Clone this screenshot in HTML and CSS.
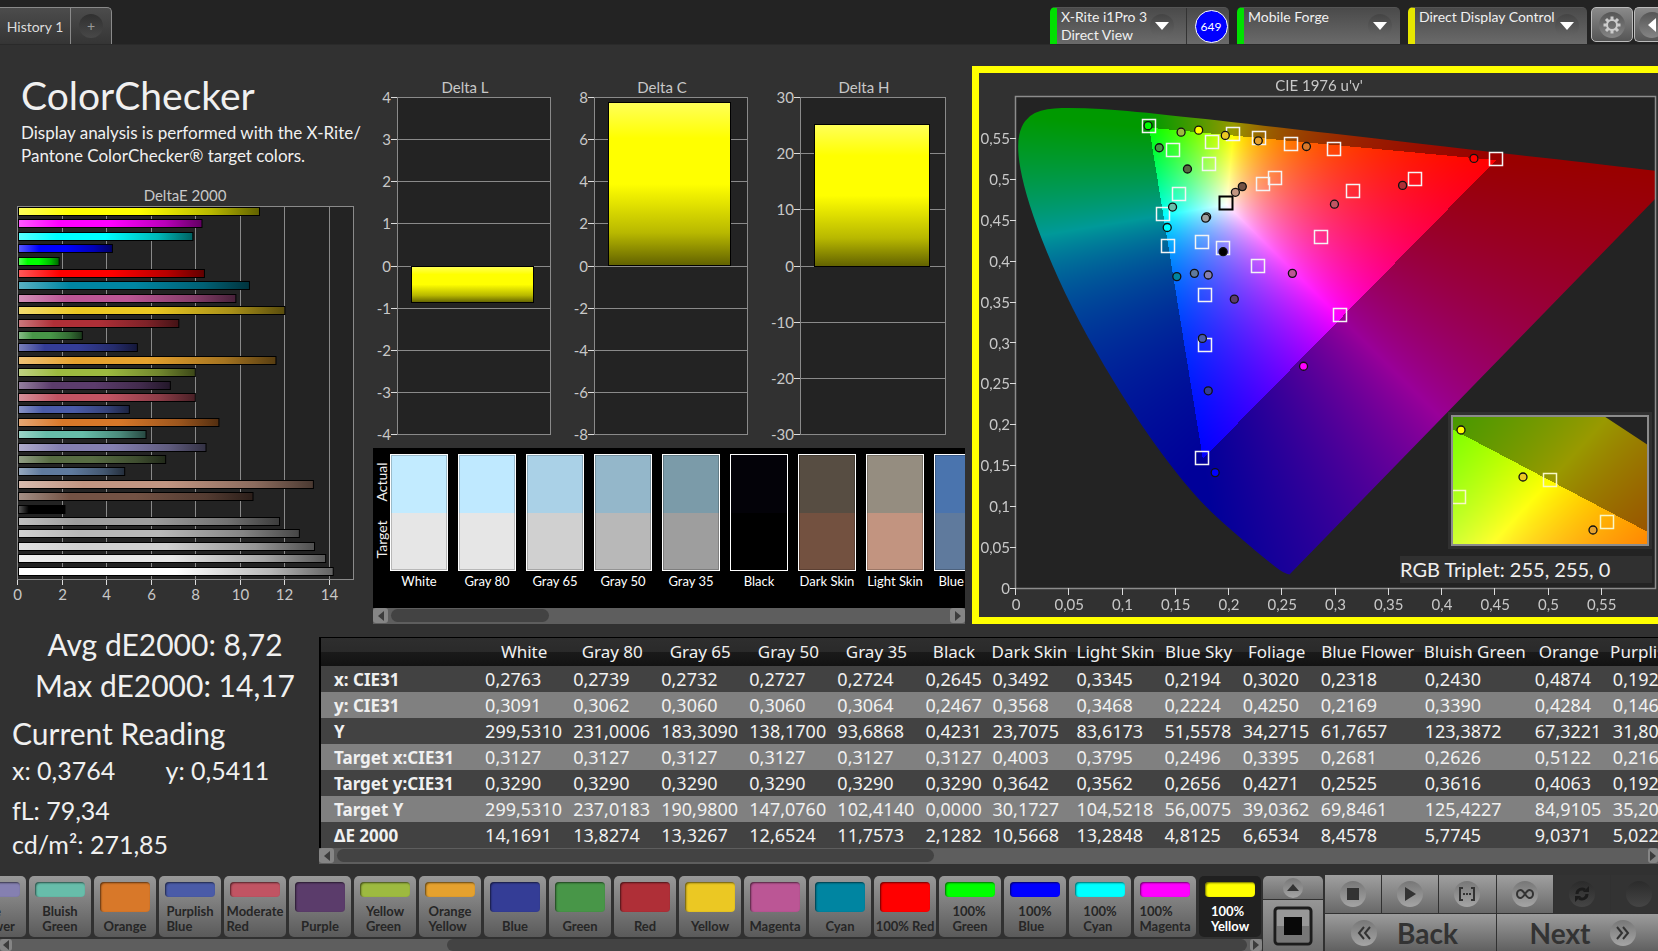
FILE: index.html
```html
<!DOCTYPE html>
<html lang="en">
<head>
<meta charset="utf-8">
<title>ColorChecker</title>
<link rel="stylesheet" href="styles.css">
</head>
<body>
<header class="topbar">
  <nav class="tabs">
    <button class="tab" type="button">History 1</button>
    <button class="tab tab-add" type="button" aria-label="Add history"><span class="add-dot">+</span></button>
  </nav>
  <div class="devices">
    <div class="device device-meter">
      <div class="device-main">
        <select class="device-select" aria-label="Meter"><option>X-Rite i1Pro 3</option></select>
        <span class="device-mode">Direct View</span>
        <span class="drop"><svg width="14" height="8"><path d="M0 0h14l-7 8z" fill="#fff"/></svg></span>
      </div>
      <div class="badge-cell"><span class="badge">649</span></div>
    </div>
    <div class="device device-source">
      <div class="device-main">
        <select class="device-select" aria-label="Source"><option>Mobile Forge</option></select>
        <span class="drop"><svg width="14" height="8"><path d="M0 0h14l-7 8z" fill="#fff"/></svg></span>
      </div>
    </div>
    <div class="device device-display">
      <div class="device-main">
        <select class="device-select" aria-label="Display"><option>Direct Display Control</option></select>
        <span class="drop"><svg width="14" height="8"><path d="M0 0h14l-7 8z" fill="#fff"/></svg></span>
      </div>
    </div>
    <button class="square-btn" type="button" aria-label="Settings"><span class="round"><svg width="20" height="20" viewBox="-10 -10 20 20"><g fill="#ccc"><path d="M-1.500 -8.500h3v4h-3z"/><path d="M-1.500 -8.500h3v4h-3z" transform="rotate(45)"/><path d="M-1.500 -8.500h3v4h-3z" transform="rotate(90)"/><path d="M-1.500 -8.500h3v4h-3z" transform="rotate(135)"/><path d="M-1.500 -8.500h3v4h-3z" transform="rotate(180)"/><path d="M-1.500 -8.500h3v4h-3z" transform="rotate(225)"/><path d="M-1.500 -8.500h3v4h-3z" transform="rotate(270)"/><path d="M-1.500 -8.500h3v4h-3z" transform="rotate(315)"/></g><circle r="5" fill="none" stroke="#ccc" stroke-width="2"/></svg></span></button>
    <button class="square-btn square-cut" type="button" aria-label="Collapse"><span class="round"><svg width="8" height="14"><path d="M8 0v14L0 7z" fill="#fff"/></svg></span></button>
  </div>
</header>

<main class="main">
  <section class="upper">
    <div class="summary">
      <h1 class="title">ColorChecker</h1>
      <p class="intro">Display analysis is performed with the X-Rite/<br>Pantone ColorChecker® target colors.</p>
      <svg class="chart" id="deltae" role="img" aria-label="DeltaE 2000"></svg>
    </div>
    <div class="middle">
      <div class="deltas">
        <svg class="chart" id="delta-l" role="img" aria-label="Delta L"></svg>
        <svg class="chart" id="delta-c" role="img" aria-label="Delta C"></svg>
        <svg class="chart" id="delta-h" role="img" aria-label="Delta H"></svg>
      </div>
      <div class="compare">
        <div class="compare-view">
          <div class="compare-side"><span>Actual</span><span>Target</span></div>
          <div class="compare-list" id="compare"></div>
        </div>
        <div class="scroll">
          <button class="scroll-btn" type="button" aria-label="Scroll left"><svg width="6" height="10"><path d="M6 0v10L0 5z"/></svg></button>
          <div class="track"><div class="thumb thumb-compare"></div></div>
          <button class="scroll-btn" type="button" aria-label="Scroll right"><svg width="6" height="10"><path d="M0 0v10l6-5z"/></svg></button>
        </div>
      </div>
    </div>
    <div class="cie">
      <canvas class="cie-fill" id="cie-fill"></canvas>
      <svg class="cie-axes" id="cie" role="img" aria-label="CIE 1976 u'v'"></svg>
      <div class="inset"><canvas class="inset-fill" id="inset-fill"></canvas><svg class="inset-marks" id="inset"></svg></div>
      <p class="triplet">RGB Triplet: 255, 255, 0</p>
    </div>
  </section>

  <section class="lower">
    <div class="reading">
      <p class="stat">Avg dE2000: 8,72</p>
      <p class="stat">Max dE2000: 14,17</p>
      <h2 class="reading-title">Current Reading</h2>
      <p class="pair"><span>x: 0,3764</span><span>y: 0,5411</span></p>
      <p class="line line-fl">fL: 79,34</p>
      <p class="line">cd/m²: 271,85</p>
    </div>
    <div class="data">
      <div class="data-view">
        <table class="grid">
          <colgroup><col class="c-name"><col class="c-88"><col class="c-88"><col class="c-88"><col class="c-88"><col class="c-88"><col class="c-67"><col class="c-84"><col class="c-88"><col class="c-78"><col class="c-78"><col class="c-104"><col class="c-110"><col class="c-78"><col class="c-110"></colgroup>
          <thead><tr><th></th><th scope="col">White</th><th scope="col">Gray 80</th><th scope="col">Gray 65</th><th scope="col">Gray 50</th><th scope="col">Gray 35</th><th scope="col">Black</th><th scope="col">Dark Skin</th><th scope="col">Light Skin</th><th scope="col">Blue Sky</th><th scope="col">Foliage</th><th scope="col">Blue Flower</th><th scope="col">Bluish Green</th><th scope="col">Orange</th><th scope="col">Purplish Blue</th></tr></thead>
          <tbody>
            <tr><th scope="row">x: CIE31</th><td>0,2763</td><td>0,2739</td><td>0,2732</td><td>0,2727</td><td>0,2724</td><td>0,2645</td><td>0,3492</td><td>0,3345</td><td>0,2194</td><td>0,3020</td><td>0,2318</td><td>0,2430</td><td>0,4874</td><td>0,192</td></tr>
            <tr><th scope="row">y: CIE31</th><td>0,3091</td><td>0,3062</td><td>0,3060</td><td>0,3060</td><td>0,3064</td><td>0,2467</td><td>0,3568</td><td>0,3468</td><td>0,2224</td><td>0,4250</td><td>0,2169</td><td>0,3390</td><td>0,4284</td><td>0,146</td></tr>
            <tr><th scope="row">Y</th><td>299,5310</td><td>231,0006</td><td>183,3090</td><td>138,1700</td><td>93,6868</td><td>0,4231</td><td>23,7075</td><td>83,6173</td><td>51,5578</td><td>34,2715</td><td>61,7657</td><td>123,3872</td><td>67,3221</td><td>31,80</td></tr>
            <tr><th scope="row">Target x:CIE31</th><td>0,3127</td><td>0,3127</td><td>0,3127</td><td>0,3127</td><td>0,3127</td><td>0,3127</td><td>0,4003</td><td>0,3795</td><td>0,2496</td><td>0,3395</td><td>0,2681</td><td>0,2626</td><td>0,5122</td><td>0,216</td></tr>
            <tr><th scope="row">Target y:CIE31</th><td>0,3290</td><td>0,3290</td><td>0,3290</td><td>0,3290</td><td>0,3290</td><td>0,3290</td><td>0,3642</td><td>0,3562</td><td>0,2656</td><td>0,4271</td><td>0,2525</td><td>0,3616</td><td>0,4063</td><td>0,192</td></tr>
            <tr><th scope="row">Target Y</th><td>299,5310</td><td>237,0183</td><td>190,9800</td><td>147,0760</td><td>102,4140</td><td>0,0000</td><td>30,1727</td><td>104,5218</td><td>56,0075</td><td>39,0362</td><td>69,8461</td><td>125,4227</td><td>84,9105</td><td>35,20</td></tr>
            <tr><th scope="row">ΔE 2000</th><td>14,1691</td><td>13,8274</td><td>13,3267</td><td>12,6524</td><td>11,7573</td><td>2,1282</td><td>10,5668</td><td>13,2848</td><td>4,8125</td><td>6,6534</td><td>8,4578</td><td>5,7745</td><td>9,0371</td><td>5,022</td></tr>
          </tbody>
        </table>
      </div>
      <div class="scroll">
        <button class="scroll-btn" type="button" aria-label="Scroll left"><svg width="6" height="10"><path d="M6 0v10L0 5z"/></svg></button>
        <div class="track"><div class="thumb thumb-data"></div></div>
        <button class="scroll-btn scroll-cut" type="button" aria-label="Scroll right"><svg width="6" height="10"><path d="M0 0v10l6-5z"/></svg></button>
      </div>
    </div>
  </section>
</main>

<footer class="bottom">
  <div class="strip">
    <div class="patches" id="patches"></div>
    <div class="scroll scroll-strip">
      <button class="scroll-btn" type="button" aria-label="Scroll left"><svg width="6" height="10"><path d="M6 0v10L0 5z"/></svg></button>
      <div class="track"><div class="thumb thumb-strip"></div></div>
      <button class="scroll-btn" type="button" aria-label="Scroll right"><svg width="6" height="10"><path d="M0 0v10l6-5z"/></svg></button>
    </div>
  </div>
  <div class="view">
    <button class="view-up" type="button" aria-label="Expand"><span class="knob knob-up"><svg width="12" height="7"><path d="M0 7h12L6 0z"/></svg></span></button>
    <button class="view-window" type="button" aria-label="Pattern window"><svg width="40" height="40"><rect x="2" y="2" width="36" height="36" rx="3" fill="#989898" stroke="#1c1c1c" stroke-width="3"/><path d="M4 20h32v16H4z" fill="#777"/><rect x="11" y="11" width="18" height="18" fill="#080808"/></svg></button>
  </div>
  <div class="control">
    <div class="transport">
      <button class="key" type="button" aria-label="Stop"><span class="knob"><svg width="12" height="12"><path d="M0 0h12v12H0z"/></svg></span></button>
      <button class="key" type="button" aria-label="Play"><span class="knob"><svg width="12" height="14"><path d="M1 0v14l11-7z"/></svg></span></button>
      <button class="key" type="button" aria-label="Read range"><span class="knob"><svg width="18" height="14" viewBox="0 0 18 14"><path d="M5 1H2v12h3M13 1h3v12h-3" fill="none" stroke="#333" stroke-width="2"/><path d="M5 6h2v2H5zM8 6h2v2H8zM11 6h2v2h-2z"/></svg></span></button>
      <button class="key" type="button" aria-label="Continuous"><span class="knob"><svg width="18" height="10" viewBox="0 0 18 10"><path d="M9 5C7 2 6 1 4.500 1a3.500 4 0 0 0 0 8C6 9 7 8 9 5s3-4 4.500-4a3.500 4 0 0 1 0 8C12 9 11 8 9 5z" fill="none" stroke="#333" stroke-width="2"/></svg></span></button>
      <button class="key key-off" type="button" aria-label="Repeat" disabled><span class="knob"><svg width="16" height="16" viewBox="0 0 16 16"><path d="M3 8a5 5 0 0 1 8-4M13 8a5 5 0 0 1-8 4" fill="none" stroke="#1c1c1c" stroke-width="3"/><path d="M9 6h6V0zM7 10H1v6z" fill="#1c1c1c"/></svg></span></button>
      <button class="key key-off" type="button" aria-label="Record" disabled><span class="knob"></span></button>
    </div>
    <div class="steps">
      <button class="step" type="button"><span class="knob"><svg width="14" height="14" viewBox="0 0 14 14"><path d="M7 1L2 7l5 6M13 1L8 7l5 6" fill="none" stroke="#333" stroke-width="2"/></svg></span>Back</button>
      <button class="step step-next" type="button">Next<span class="knob"><svg width="14" height="14" viewBox="0 0 14 14"><path d="M1 1l5 6-5 6M7 1l5 6-5 6" fill="none" stroke="#333" stroke-width="2"/></svg></span></button>
    </div>
  </div>
</footer>
<script src="app.js"></script>
</body>
</html>
```

FILE: styles.css
```css
* { box-sizing: border-box; }
body {
  margin: 0;
  min-height: 100vh;
  display: flex;
  flex-direction: column;
  overflow: hidden;
  background: #313131;
  color: #f0f0f0;
  font-family: Lato, "Open Sans", sans-serif;
}
button, select { font-family: inherit; margin: 0; padding: 0; border: 0; }
h1, h2, p { margin: 0; font-weight: 400; }

/* top bar */
.topbar {
  display: flex;
  justify-content: space-between;
  height: 45px;
  padding-top: 7px;
  background: #232323;
  border-bottom: 1px solid #2a2a2a;
  flex: none;
}
.tabs { display: flex; }
.tab {
  width: 71px;
  border-top: 1px solid #8a8a8a;
  border-right: 1px solid #8a8a8a;
  background: linear-gradient(#4c4c4c, #353535);
  color: #dcdcdc;
  font-size: 14px;
}
.tab-add { width: 41px; border-top-right-radius: 5px; display: grid; place-items: center; }
.add-dot {
  width: 24px; height: 24px; border-radius: 50%;
  background: linear-gradient(#303030, #484848);
  color: #999; font-size: 14px; line-height: 24px;
}
.devices { display: flex; }
.device {
  display: flex;
  margin-right: 8px;
  border-left: 7px solid #0c0;
  border-radius: 5px 5px 0 0;
  background: linear-gradient(#4a4a4a, #6a6a6a);
  border-top: 1px solid #555;
}
.device-meter, .device-source { border-left-color: #00e000; }
.device-meter { width: 179px; }
.device-source { width: 163px; }
.device-display { width: 179px; border-left-color: #e6e600; margin-right: 4px; }
.device-main {
  flex: 1;
  display: grid;
  grid-template-columns: 1fr 24px;
  grid-template-rows: 17px 19px;
  padding-right: 12px;
  padding-left: 4px;
}
.device-source .device-main { padding-right: 8px; }
.device-select {
  appearance: none;
  background: none;
  color: #f0f0f0;
  font-size: 14px;
  line-height: 17px;
  grid-column: 1;
  grid-row: 1;
  overflow: visible;
}
.device-mode { grid-column: 1; grid-row: 2; font-size: 14px; line-height: 19px; }
.drop {
  grid-column: 2; grid-row: 1 / 3; align-self: center;
  width: 24px; height: 24px; border-radius: 50%;
  display: grid; place-items: center;
  background: linear-gradient(#444, #666);
}
.badge-cell { width: 43px; border-left: 1px solid #333; padding-left: 6px; display: grid; place-items: center; }
.badge {
  width: 33px; height: 33px; border-radius: 50%;
  background: #00f; border: 1px solid #fff;
  font-size: 12px; line-height: 31px; text-align: center; color: #fff;
}
.square-btn {
  width: 42px; height: 35px; margin-right: 1px;
  border: 1px solid #bbb; border-radius: 5px;
  background: linear-gradient(#8a8a8a, #555);
  display: grid; place-items: center;
}
.square-cut { width: 24px; margin-right: 0; border-right: 0; border-radius: 5px 0 0 5px; justify-content: start; padding-left: 4px; overflow: hidden; }
.round {
  width: 26px; height: 26px; border-radius: 50%;
  display: grid; place-items: center;
  background: linear-gradient(#555, #858585);
}

/* main areas */
.main { flex: 1; display: flex; flex-direction: column; }
.upper { flex: 1; display: flex; min-height: 579px; }
.summary { width: 373px; display: flex; flex-direction: column; flex: none; }
.title { padding: 26px 0 0 21px; font-size: 39px; line-height: 48px; }
.intro { padding: 2px 0 0 21px; font-size: 17px; line-height: 23px; white-space: nowrap; }
.chart { display: block; flex: 1; width: 100%; min-height: 0; font-size: 15px; fill: #c8c8c8; }
.middle { width: 592px; flex: none; display: flex; flex-direction: column; }
.deltas { flex: 1; display: grid; grid-template-columns: 196px 198px 198px; min-height: 0; }
.deltas .chart { height: 100%; }

.compare { background: #000; }
.compare-view { display: flex; height: 160px; padding-top: 6px; overflow: hidden; }
.compare-side { width: 17px; flex: none; display: flex; flex-direction: column; height: 113px; }
.compare-side span {
  flex: 1; writing-mode: vertical-rl; transform: rotate(180deg);
  text-align: center; font-size: 14px; line-height: 17px;
}
.compare-list { display: flex; gap: 10px; }
.pair-card { width: 58px; flex: none; margin: 0; }
.pair-box { display: flex; flex-direction: column; height: 117px; border: 1px solid #fff; outline: 1px solid rgba(0,0,0,.2); outline-offset: -2px; }
.pair-box span { flex: 1; }
.pair-card figcaption { font-size: 13px; line-height: 20px; text-align: center; white-space: nowrap; color: #fff; }

.scroll { display: flex; height: 16px; background: #5e5e5e; }
.scroll-btn { width: 15px; height: 15px; border-radius: 3px; background: #858585; fill: #3c3c3c; display: grid; place-items: center; }
.scroll-cut { width: 10px; }
.track { flex: 1; padding: 1px 3px; }
.thumb { height: 13px; border-radius: 7px; background: #434343; }
.thumb-compare { width: 158px; }
.thumb-data { width: 597px; max-width: 50%; }
.thumb-strip { width: 800px; margin-left: auto; }

.cie {
  flex: 1; min-width: 0;
  position: relative;
  margin: 21px 0 0 7px;
  border: 7px solid #ff0;
  border-right: 0;
}
.cie-fill { position: absolute; }
.cie-axes { position: absolute; inset: 0; width: 100%; height: 100%; font-size: 15px; fill: #c8c8c8; }
.inset {
  position: absolute; right: 6px; bottom: 68px;
  width: 204px; height: 137px; padding: 3px;
  background: #303030;
}
.inset-fill, .inset-marks { position: absolute; left: 3px; top: 3px; width: 198px; height: 131px; }
.inset-marks { border: 2px solid #8c8c8c; }
.triplet {
  position: absolute; right: 6px; bottom: 34px;
  width: 252px; background: #303030;
  font-size: 20px; line-height: 27px;
}

/* readings and table */
.lower { display: flex; height: 250px; flex: none; }
.reading { width: 319px; flex: none; }
.stat { width: 330px; text-align: center; font-size: 30px; line-height: 41px; }
.reading-title { padding-left: 12px; font-size: 30px; line-height: 40px; margin-top: 7px; }
.pair { display: flex; padding-left: 12px; font-size: 25px; line-height: 34px; }
.pair span { width: 157px; }
.line { padding-left: 12px; font-size: 25px; line-height: 34px; }
.line-fl { margin-top: 6px; }
.data { flex: 1; min-width: 0; padding: 13px 0 0; }
.data-view { overflow: hidden; border-top: 1px solid #000; border-left: 2px solid #000; }
.grid { border-collapse: collapse; table-layout: fixed; width: 1397px; font-family: "Noto Sans", "Open Sans", sans-serif; }
.c-name { width: 159px; }
.c-67 { width: 67px; }
.c-78 { width: 78px; }
.c-84 { width: 84px; }
.c-88 { width: 88px; }
.c-104 { width: 104px; }
.c-110 { width: 110px; }
.grid th, .grid td { padding: 0 5px; white-space: nowrap; height: 26px; }
.grid thead tr { background: linear-gradient(#2e2e2e, #2a2a2a 50%, #1a1a1a 50%, #121212); }
.grid thead th { height: 28px; font-weight: 400; font-size: 17px; line-height: 28px; padding: 0; }
.grid tbody th { text-align: left; padding-left: 13px; font-size: 17px; line-height: 25px; }
.grid tbody td { font-size: 18px; line-height: 25px; }
.grid tbody tr { background: #424242; }
.grid tbody tr:nth-child(even) { background: #808080; }

/* bottom bar */
.bottom { display: flex; height: 77px; flex: none; background: #313131; }
.strip { flex: 1; min-width: 0; display: flex; flex-direction: column; justify-content: space-between; }
.patches { display: flex; justify-content: flex-end; gap: 3px; overflow: hidden; padding: 2px 1px 0 0; }
.patch {
  width: 62px; height: 61px; flex: none;
  display: flex; flex-direction: column; align-items: center; justify-content: space-between;
  padding-top: 6px; padding-bottom: 3px;
  border-radius: 5px;
  background: linear-gradient(#999, #5a5a5a);
  color: #262626; font-size: 13px; line-height: 15px; font-weight: 700; text-align: left;
}
.patch-on { background: #202020; color: #fff; }
.chip { width: 50px; height: 15px; border-radius: 4px; box-shadow: inset 1px 1px 2px rgba(0,0,0,.6); }
.chip-tall { height: 30px; }
.scroll-strip { height: 12px; }
.scroll-strip .scroll-btn { width: 12px; height: 12px; }
.scroll-strip .track { padding: 0 3px; }
.scroll-strip .thumb { height: 12px; }
.view { width: 60px; margin: 2px 2px 0 1px; display: flex; flex-direction: column; gap: 1px; }
.view-up, .view-window { display: grid; place-items: center; background: linear-gradient(#969696, #6e6e6e); }
.view-up { height: 23px; border-radius: 5px 5px 0 0; }
.view-window { flex: 1; }
.control { width: 333px; flex: none; display: flex; flex-direction: column; overflow: hidden; padding-top: 1px; }
.transport { display: flex; gap: 1px; height: 38px; width: 342px; }
.key { flex: 1; display: grid; place-items: center; background: linear-gradient(#a0a0a0, #686868); }
.key-off { background: #333; }
.knob {
  width: 26px; height: 26px; border-radius: 50%;
  display: grid; place-items: center; flex: none;
  background: linear-gradient(#777, #a5a5a5);
  fill: #333;
}
.knob-up { width: 20px; height: 20px; }
.key-off .knob { background: linear-gradient(#2b2b2b, #454545); }
.steps { display: grid; grid-template-columns: 1fr 1fr; gap: 1px; flex: 1; margin-top: 1px; width: 342px; }
.step {
  display: flex; align-items: center; gap: 20px; padding-left: 26px;
  background: linear-gradient(#9c9c9c, #606060);
  color: #333; font-size: 28px; line-height: 34px; font-weight: 700;
}
.step-next { padding-left: 33px; }
```

FILE: app.js
```js
const NS = 'http://www.w3.org/2000/svg';

function add(parent, tag, attrs, text) {
  const el = document.createElementNS(NS, tag);
  for (const k in attrs) el.setAttribute(k, attrs[k]);
  if (text !== undefined) el.textContent = text;
  parent.appendChild(el);
  return el;
}

function shade(hex, t) {
  const to = t > 0 ? 255 : 0, a = Math.abs(t);
  return 'rgb(' + [1, 3, 5].map(i => {
    const c = parseInt(hex.substr(i, 2), 16);
    return Math.round(c + (to - c) * a);
  }).join(',') + ')';
}

function gradient(svg, id, color, vertical) {
  const g = add(svg, 'linearGradient', vertical ? { id, x1: 0, y1: 0, x2: 0, y2: 1 } : { id });
  [[0, .35], [.22, 0], [.5, 0], [.8, -.28], [1, -.62]].forEach(([o, t]) =>
    add(g, 'stop', { offset: o, 'stop-color': shade(color, t) }));
}

/* DeltaE bars, top to bottom */
const bars = [
  [10.86, '#ffff00'], [8.28, '#ff00ff'], [7.87, '#00ffff'], [4.26, '#0000ff'], [1.87, '#00ff00'],
  [8.39, '#ff0000'], [10.41, '#0085a1'], [9.8, '#bb5695'], [12, '#ebc823'], [7.24, '#af2f37'],
  [2.91, '#489648'], [5.38, '#343d96'], [11.6, '#e5a12e'], [7.98, '#9dba40'], [6.86, '#5b3c6b'],
  [7.98, '#c15463'], [5.02, '#4a5ba8'], [9.04, '#d87829'], [5.77, '#67bdaa'], [8.46, '#8580b1'],
  [6.65, '#576c43'], [4.81, '#5f7a9d'], [13.28, '#c29682'], [10.57, '#735244'], [2.13, '#000000'],
  [11.76, '#9e9e9e'], [12.65, '#b8b8b8'], [13.33, '#d0d0d0'], [13.83, '#e6e6e6'], [14.17, '#ffffff']
];

function drawDeltaE() {
  const svg = document.getElementById('deltae');
  svg.replaceChildren();
  const h = svg.clientHeight, x0 = 17, w = 336, y0 = 39, y1 = h - 45, unit = w / 15.08;
  add(svg, 'text', { x: x0 + w / 2, y: y0 - 5, 'text-anchor': 'middle' }, 'DeltaE 2000');
  add(svg, 'rect', { x: x0, y: y0, width: w, height: y1 - y0, fill: '#232323' });
  for (let v = 0; v <= 14; v += 2) {
    const x = Math.round(x0 + v * unit) + .5;
    add(svg, 'path', { d: `M${x} ${y0}V${y1}`, stroke: '#8a8a8a' });
    add(svg, 'path', { d: `M${x} ${y1}v6`, stroke: '#ddd' });
    add(svg, 'text', { x, y: y1 + 21, 'text-anchor': 'middle' }, v);
  }
  add(svg, 'rect', { x: x0 + .5, y: y0 + .5, width: w, height: y1 - y0, fill: 'none', stroke: '#8a8a8a' });
  const step = (y1 - y0 - 1) / bars.length;
  bars.forEach(([v, c], i) => {
    gradient(svg, 'bar' + i, c);
    const y = Math.round(y0 + 1 + i * step) + .5;
    add(svg, 'rect', { x: x0 + 1.5, y, width: v * unit - 1, height: 8, fill: `url(#bar${i})`, stroke: '#000' });
  });
}

function drawDelta(id, title, max, step, value, left, w) {
  const svg = document.getElementById(id);
  svg.replaceChildren();
  const y0 = 52, y1 = svg.clientHeight - 14, mid = (y0 + y1) / 2, unit = (y1 - y0) / 2 / max;
  add(svg, 'text', { x: left + w / 2 - 9, y: y0 - 4, 'text-anchor': 'middle' }, title);
  add(svg, 'rect', { x: left, y: y0, width: w, height: y1 - y0, fill: '#232323' });
  for (let v = -max; v <= max; v += step) {
    const y = Math.round(mid - v * unit) + .5;
    add(svg, 'path', { d: `M${left} ${y}h${w}`, stroke: '#8a8a8a' });
    add(svg, 'path', { d: `M${left - 6} ${y}h6`, stroke: '#ddd' });
    add(svg, 'text', { x: left - 6, y: y + 5, 'text-anchor': 'end' }, v);
  }
  add(svg, 'rect', { x: left + .5, y: y0 + .5, width: w - 1, height: y1 - y0, fill: 'none', stroke: '#8a8a8a' });
  gradient(svg, id + '-fill', '#ffff00', true);
  const top = mid - Math.max(value, 0) * unit;
  add(svg, 'rect', {
    x: Math.round(left + w * .1) - .5, y: Math.round(top) + .5, width: Math.round(w * .79), height: Math.round(Math.abs(value) * unit),
    fill: `url(#${id}-fill)`, stroke: '#000'
  });
}

/* spectral locus, CIE 1931 xy */
const locus = [
  [.1741, .005], [.1714, .0051], [.1644, .0109], [.1566, .0177], [.144, .0297], [.1355, .0399],
  [.1241, .0578], [.1096, .0868], [.0913, .1327], [.0687, .2007], [.0454, .295], [.0235, .4127],
  [.0082, .5384], [.0039, .6548], [.0139, .7502], [.0389, .812], [.0743, .8338], [.1142, .8262],
  [.1547, .8059], [.2296, .7543], [.3016, .6923], [.3731, .6245], [.4441, .5547], [.5125, .4866],
  [.5752, .4242], [.627, .3725], [.6658, .334], [.6915, .3083], [.719, .2809], [.7347, .2653]
];
const toUV = ([x, y]) => [4 * x / (-2 * x + 12 * y + 3), 9 * y / (-2 * x + 12 * y + 3)];
const toXY = (u, v) => [9 * u / (6 * u - 16 * v + 12), 4 * v / (6 * u - 16 * v + 12)];

function linear(x, y) {
  const z = 1 - x - y;
  return [
    3.2405 * x - 1.5371 * y - .4985 * z,
    -.9693 * x + 1.876 * y + .0416 * z,
    .0556 * x - .204 * y + 1.0572 * z
  ];
}

/* fills a canvas with chromaticity colours, dimmed outside the gamut */
function paint(canvas, w, h, toChroma, outline) {
  canvas.width = w;
  canvas.height = h;
  const ctx = canvas.getContext('2d');
  const img = ctx.createImageData(w, h);
  for (let py = 0; py < h; py++) {
    for (let px = 0; px < w; px++) {
      const [x, y] = toChroma(px + .5, py + .5);
      const rgb = linear(x, y);
      const top = Math.max(...rgb);
      const k = Math.min(...rgb) < 0 ? .6 : 1;
      const at = (py * w + px) * 4;
      for (let c = 0; c < 3; c++) {
        img.data[at + c] = 255 * k * Math.max(0, rgb[c]) / top;
      }
      img.data[at + 3] = 255;
    }
  }
  ctx.putImageData(img, 0, 0);
  ctx.globalCompositeOperation = 'destination-in';
  ctx.beginPath();
  outline.forEach(([x, y], i) => {
    if (i === 0) { ctx.moveTo(x, y); return; }
    const n = outline[i + 1];
    if (n) ctx.quadraticCurveTo(x, y, (x + n[0]) / 2, (y + n[1]) / 2);
    else ctx.lineTo(x, y);
  });
  ctx.closePath();
  ctx.fill();
  ctx.globalCompositeOperation = 'destination-over';
  ctx.fillStyle = '#232323';
  ctx.fillRect(0, 0, w, h);
}

const targets = [
  [.1245, .5645], [.147, .5355], [.1842, .5452], [.2035, .555], [.2285, .55], [.2585, .542], [.299, .537],
  [.1815, .5185], [.232, .494], [.2435, .501], [.1533, .481], [.1383, .4575], [.143, .4185], [.175, .4222],
  [.1945, .416], [.2275, .394], [.1778, .3575], [.1778, .2965], [.2865, .429], [.4503, .5245], [.3742, .5],
  [.3168, .4855], [.3045, .333], [.175, .1594]
];
const reads = [
  [.124, .565, '#00ff00'], [.155, .557, '#9dba40'], [.1715, .5595, '#ffff00'], [.1965, .553, '#ebc823'],
  [.2275, .5465, '#e5a12e'], [.2727, .5395, '#d87829'], [.1345, .538, '#489648'], [.161, .512, '#576c43'],
  [.2125, .4905, '#735244'], [.206, .4835, '#c29682'], [.147, .4655, '#67bdaa'], [.142, .4405, '#00ffff'],
  [.179, .4535, '#b8b8b8'], [.178, .452, '#9e9e9e'], [.151, .3805, '#0085a1'], [.1675, .3845, '#5f7a9d'],
  [.1805, .3825, '#8580b1'], [.1945, .411, '#000000'], [.205, .353, '#5b3c6b'], [.175, .305, '#4a5ba8'],
  [.2595, .3845, '#bb5695'], [.27, .271, '#ff00ff'], [.43, .525, '#ff0000'], [.363, .492, '#af2f37'],
  [.299, .469, '#c15463'], [.1805, .241, '#343d96'], [.187, .141, '#0000ff']
];

const square = (svg, x, y, c, width) => add(svg, 'rect', {
  x: Math.round(x) - 6.5, y: Math.round(y) - 6.5, width: 13, height: 13, fill: 'none', stroke: c, 'stroke-width': width
});
const dot = (svg, x, y, c) => add(svg, 'circle', { cx: x, cy: y, r: 4, fill: c, stroke: '#111', 'stroke-width': 1.3 });

function drawCie() {
  const svg = document.getElementById('cie');
  const canvas = document.getElementById('cie-fill');
  svg.replaceChildren();
  const x0 = 37, y0 = 24, w = svg.clientWidth - x0 - 3, h = svg.clientHeight - y0 - 29;
  canvas.style.left = x0 + 'px';
  canvas.style.top = y0 + 'px';
  const X = u => u / .6 * w, Y = v => h - v / .6 * h;
  paint(canvas, w, h, (px, py) => toXY(px / w * .6, (h - py) / h * .6), locus.map(toUV).map(([u, v]) => [X(u), Y(v)]));
  add(svg, 'text', { x: 340, y: 18, 'text-anchor': 'middle' }, "CIE 1976 u'v'");
  add(svg, 'rect', { x: x0 - .5, y: y0 - .5, width: w + 1, height: h + 1, fill: 'none', stroke: '#8c8c8c', 'stroke-width': 1.5 });
  for (let i = 0; i < 12; i++) {
    const label = String(i * 5 / 100).replace('.', ',');
    const x = x0 + X(i * .05), y = y0 + Y(i * .05);
    add(svg, 'path', { d: `M${Math.round(x) - .5} ${y0 + h}v7M${x0} ${Math.round(y) + .5}h-6`, stroke: '#ddd' });
    add(svg, 'text', { x, y: y0 + h + 22, 'text-anchor': 'middle' }, label);
    add(svg, 'text', { x: x0 - 6, y: y + 6, 'text-anchor': 'end' }, label);
  }
  targets.forEach(([u, v]) => square(svg, x0 + X(u), y0 + Y(v), '#f4f4f4', 1.5));
  square(svg, x0 + X(.197), y0 + Y(.4705), '#000', 2);
  reads.forEach(([u, v, c]) => dot(svg, x0 + X(u), y0 + Y(v), c));
}

/* close-up around the current target, in CIE 1931 xy */
function drawInset() {
  const svg = document.getElementById('inset');
  svg.replaceChildren();
  const w = 198, h = 131, span = .097, cx = .4193, cy = .5053;
  const X = x => ((x - cx) / span + .5) * w, Y = y => (.5 - (y - cy) / span) * h;
  paint(document.getElementById('inset-fill'), w, h,
    (px, py) => [cx + (px / w - .5) * span, cy + (.5 - py / h) * span],
    locus.map(([x, y]) => [X(x), Y(y)]));
  [[97, 63], [154, 105], [6, 80]].forEach(([x, y]) => square(svg, x, y, '#f8f8c8', 1.5));
  dot(svg, 8, 13, '#ffff00');
  dot(svg, 70, 60, '#ebc823');
  dot(svg, 140, 113, '#e5a12e');
}

const pairs = [
  ['White', '#c2ebff', '#e6e6e6'], ['Gray 80', '#bfe9ff', '#e6e6e6'], ['Gray 65', '#aad1e7', '#d0d0d0'],
  ['Gray 50', '#94b7ca', '#b8b8b8'], ['Gray 35', '#7b9ba9', '#9e9e9e'], ['Black', '#030208', '#000000'],
  ['Dark Skin', '#574d42', '#735140'], ['Light Skin', '#958d80', '#c29480'], ['Blue Sky', '#4a74ae', '#5f7a9d']
];
document.getElementById('compare').innerHTML = pairs.map(([n, a, t]) =>
  `<figure class="pair-card"><div class="pair-box"><span style="background:${a}"></span><span style="background:${t}"></span></div><figcaption>${n}</figcaption></figure>`).join('');

const patches = [
  ['Blue<br>Flower', '#8580b1'], ['Bluish<br>Green', '#67bdaa'], ['Orange', '#d87829'], ['Purplish<br>Blue', '#4a5ba8'],
  ['Moderate<br>Red', '#c15463'], ['Purple', '#5b3c6b'], ['Yellow<br>Green', '#9dba40'], ['Orange<br>Yellow', '#e5a12e'],
  ['Blue', '#343d96'], ['Green', '#489648'], ['Red', '#af2f37'], ['Yellow', '#ebc823'], ['Magenta', '#bb5695'],
  ['Cyan', '#0085a1'], ['100% Red', '#ff0000'], ['100%<br>Green', '#00ff00'], ['100%<br>Blue', '#0000ff'],
  ['100%<br>Cyan', '#00ffff'], ['100%<br>Magenta', '#ff00ff'], ['100%<br>Yellow', '#ffff00']
];
document.getElementById('patches').innerHTML = patches.map(([n, c], i) =>
  `<button type="button" class="patch${i === patches.length - 1 ? ' patch-on' : ''}"><span class="chip${n.includes('<br>') ? '' : ' chip-tall'}" style="background:${c}"></span><span>${n}</span></button>`).join('');

function draw() {
  drawDeltaE();
  drawDelta('delta-l', 'Delta L', 4, 1, -.85, 24, 154);
  drawDelta('delta-c', 'Delta C', 8, 2, 7.75, 25, 154);
  drawDelta('delta-h', 'Delta H', 30, 10, 25.2, 33, 146);
  drawCie();
  drawInset();
}
draw();
window.addEventListener('resize', draw);
```
